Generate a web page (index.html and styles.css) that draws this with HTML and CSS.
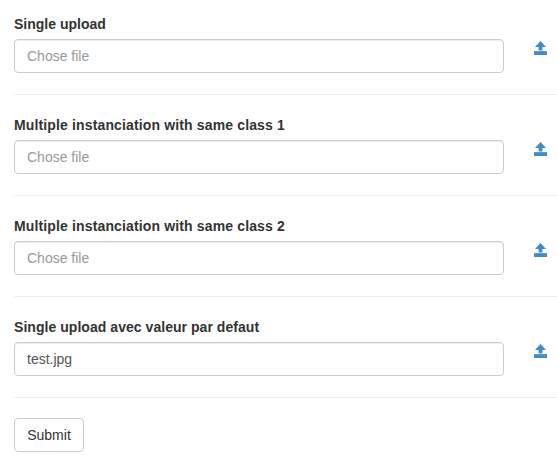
FILE: index.html
```html
<!DOCTYPE html>
<html lang="en">
<head>
<meta charset="utf-8">
<title>Upload</title>
<link rel="stylesheet" href="styles.css">
</head>
<body>
<svg class="defs"><symbol id="upload" viewBox="0 0 14 14"><path d="M7.5 0L13 6H9.4v3.6H5.6V6H2zM1 10h13v4H1z"/><path class="light" d="M11 12h1v1h-1zM1 10h13v1H1z"/></symbol></svg>
<form>
<div class="group"><label for="f1">Single upload</label><div class="row"><input id="f1" placeholder="Chose file"><svg class="icon"><use href="#upload"/></svg></div></div>
<div class="group"><label class="wide" for="f2">Multiple instanciation with same class 1</label><div class="row"><input id="f2" placeholder="Chose file"><svg class="icon"><use href="#upload"/></svg></div></div>
<div class="group"><label class="wide" for="f3">Multiple instanciation with same class 2</label><div class="row"><input id="f3" placeholder="Chose file"><svg class="icon"><use href="#upload"/></svg></div></div>
<div class="group"><label class="normal" for="f4">Single upload avec valeur par defaut</label><div class="row"><input id="f4" value="test.jpg"><svg class="icon"><use href="#upload"/></svg></div></div>
<button type="button">Submit</button>
</form>
</body>
</html>
```
FILE: styles.css
```css
* { box-sizing: border-box; }
body { margin: 0; background: #fff; color: #333; font: 14px/20px "Liberation Sans", Arial, sans-serif; overflow: hidden; }
.defs { display: none; }
form { padding: 14px 0 0 14px; }
.group { height: 81px; border-bottom: 1px solid #eee; margin-bottom: 20px; }
label { display: block; height: 20px; margin-bottom: 5px; font-weight: bold; white-space: nowrap; }
.wide { letter-spacing: .14px; }
.normal { letter-spacing: .045px; }
.row { display: flex; }
input { width: 490px; height: 34px; padding: 6px 12px; border: 1px solid #ccc; border-radius: 4px; font: inherit; color: #555; background: #fff; box-shadow: inset 0 1px 1px rgba(0,0,0,.075); }
input::placeholder { color: #999; opacity: 1; }
.icon { width: 14px; height: 14px; margin: 2px 0 0 29px; fill: #428bca; }
.light { fill: #5b9ad1; }
button { display: block; width: 70px; height: 34px; padding: 0; border: 1px solid #ccc; border-radius: 4px; background: #fff; color: #333; font: inherit; }
```
